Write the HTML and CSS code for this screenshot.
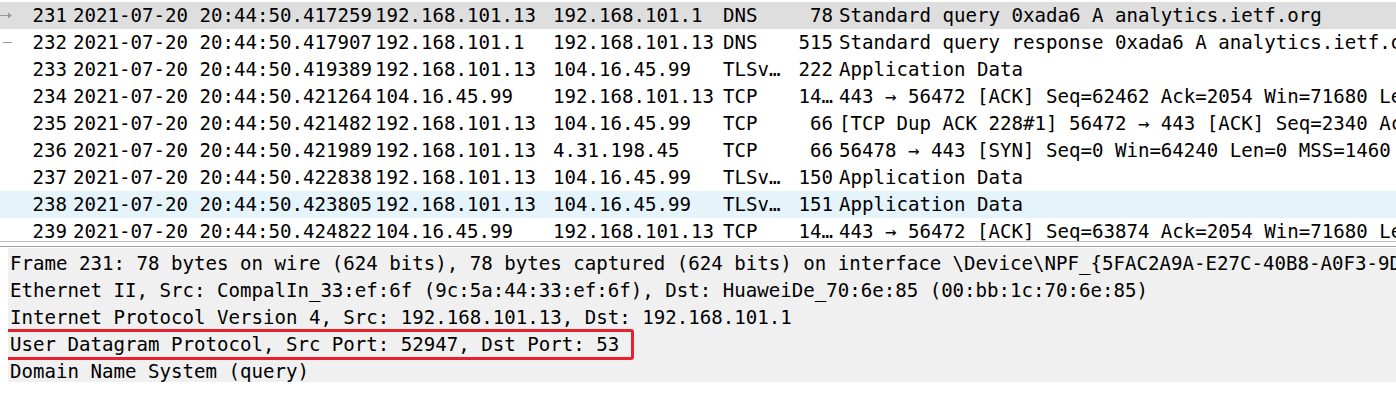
FILE: index.html
```html
<!DOCTYPE html>
<html>
<head>
<meta charset="utf-8">
<link rel="stylesheet" href="styles.css">
</head>
<body>
<div class="list">
  <div class="row sel">
    <span class="ind"><svg width="14" height="27" viewBox="0 0 14 27"><path d="M0 13.5H11" stroke="#9a9a9a" stroke-width="1"/><path d="M8 10.5L12 13.5L8 16.5Z" fill="#9a9a9a"/></svg></span>
    <span class="no">231</span><span class="time">2021-07-20 20:44:50.417259</span><span class="src">192.168.101.13</span><span class="dst">192.168.101.1</span><span class="proto">DNS</span><span class="len">78</span><span class="info">Standard query 0xada6 A analytics.ietf.org</span>
  </div>
  <div class="row">
    <span class="ind"><svg width="14" height="27" viewBox="0 0 14 27"><path d="M3 13.5H12" stroke="#9a9a9a" stroke-width="1"/></svg></span>
    <span class="no">232</span><span class="time">2021-07-20 20:44:50.417907</span><span class="src">192.168.101.1</span><span class="dst">192.168.101.13</span><span class="proto">DNS</span><span class="len">515</span><span class="info">Standard query response 0xada6 A analytics.ietf.org CNAME analytics.ietf.org.cdn.cloudflare.net</span>
  </div>
  <div class="row">
    <span class="ind"></span>
    <span class="no">233</span><span class="time">2021-07-20 20:44:50.419389</span><span class="src">192.168.101.13</span><span class="dst">104.16.45.99</span><span class="proto">TLSv…</span><span class="len">222</span><span class="info">Application Data</span>
  </div>
  <div class="row">
    <span class="ind"></span>
    <span class="no">234</span><span class="time">2021-07-20 20:44:50.421264</span><span class="src">104.16.45.99</span><span class="dst">192.168.101.13</span><span class="proto">TCP</span><span class="len">14…</span><span class="info">443 → 56472 [ACK] Seq=62462 Ack=2054 Win=71680 Len=1380 [TCP segment of a reassembled PDU]</span>
  </div>
  <div class="row">
    <span class="ind"></span>
    <span class="no">235</span><span class="time">2021-07-20 20:44:50.421482</span><span class="src">192.168.101.13</span><span class="dst">104.16.45.99</span><span class="proto">TCP</span><span class="len">66</span><span class="info">[TCP Dup ACK 228#1] 56472 → 443 [ACK] Seq=2340 Ack=62462 Win=131328 Len=0</span>
  </div>
  <div class="row">
    <span class="ind"></span>
    <span class="no">236</span><span class="time">2021-07-20 20:44:50.421989</span><span class="src">192.168.101.13</span><span class="dst">4.31.198.45</span><span class="proto">TCP</span><span class="len">66</span><span class="info">56478 → 443 [SYN] Seq=0 Win=64240 Len=0 MSS=1460 WS=256 SACK_PERM=1</span>
  </div>
  <div class="row">
    <span class="ind"></span>
    <span class="no">237</span><span class="time">2021-07-20 20:44:50.422838</span><span class="src">192.168.101.13</span><span class="dst">104.16.45.99</span><span class="proto">TLSv…</span><span class="len">150</span><span class="info">Application Data</span>
  </div>
  <div class="row hover">
    <span class="ind"></span>
    <span class="no">238</span><span class="time">2021-07-20 20:44:50.423805</span><span class="src">192.168.101.13</span><span class="dst">104.16.45.99</span><span class="proto">TLSv…</span><span class="len">151</span><span class="info">Application Data</span>
  </div>
  <div class="row">
    <span class="ind"></span>
    <span class="no">239</span><span class="time">2021-07-20 20:44:50.424822</span><span class="src">104.16.45.99</span><span class="dst">192.168.101.13</span><span class="proto">TCP</span><span class="len">14…</span><span class="info">443 → 56472 [ACK] Seq=63874 Ack=2054 Win=71680 Len=1380 [TCP segment of a reassembled PDU]</span>
  </div>
</div>
<div class="splitter"></div>
<div class="details">
  <div class="drow">Frame 231: 78 bytes on wire (624 bits), 78 bytes captured (624 bits) on interface \Device\NPF_{5FAC2A9A-E27C-40B8-A0F3-9D1B5E2C7A41}, id 0</div>
  <div class="drow">Ethernet II, Src: CompalIn_33:ef:6f (9c:5a:44:33:ef:6f), Dst: HuaweiDe_70:6e:85 (00:bb:1c:70:6e:85)</div>
  <div class="drow">Internet Protocol Version 4, Src: 192.168.101.13, Dst: 192.168.101.1</div>
  <div class="drow"><span class="mark">User Datagram Protocol, Src Port: 52947, Dst Port: 53</span></div>
  <div class="drow">Domain Name System (query)</div>
</div>
</body>
</html>
```
FILE: styles.css
```css
html, body {
  margin: 0;
  padding: 0;
  background: #ffffff;
  overflow: hidden;
}
body {
  width: 1396px;
  height: 400px;
  font-family: "DejaVu Sans Mono", "Liberation Mono", monospace;
  font-size: 19.1px;
  color: #000000;
  white-space: nowrap;
}
.list {
  padding-top: 2px;
  height: 239px;
  overflow: hidden;
  border-bottom: 1px solid #bdbdbd;
}
.row {
  display: flex;
  height: 27px;
  line-height: 27px;
  overflow: hidden;
}
.row.sel { background: #dedede; }
.row.hover { background: #e5f3fb; }
.ind {
  flex: 0 0 14px;
  height: 27px;
}
.ind svg { display: block; }
.no {
  flex: 0 0 53px;
  text-align: right;
}
.time {
  flex: 0 0 308px;
  padding-left: 6px;
  box-sizing: border-box;
}
.src { flex: 0 0 178px; }
.dst { flex: 0 0 170px; }
.proto { flex: 0 0 74px; }
.len {
  flex: 0 0 36px;
  text-align: right;
}
.info {
  padding-left: 6px;
}
.splitter {
  height: 4px;
  border-bottom: 1px solid #a0a0a0;
}
.details {
  margin-left: 8px;
  margin-top: 1px;
  background: #f0f0f0;
  padding-top: 2px;
  height: 134px;
  box-sizing: border-box;
  overflow: hidden;
}
.drow {
  height: 27px;
  line-height: 27px;
  padding-left: 2px;
}
.mark {
  position: relative;
}
.mark::after {
  content: "";
  position: absolute;
  left: -5px;
  right: -15px;
  top: -4px;
  bottom: -4px;
  border: 3px solid #e8212e;
  border-radius: 3px;
}
```
